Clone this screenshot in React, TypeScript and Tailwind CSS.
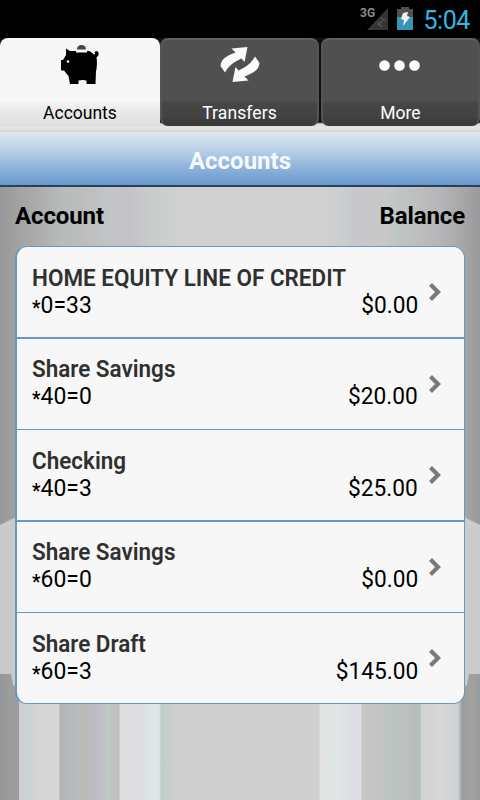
type Account = {
  name: string;
  number: string;
  balance: string;
  rowClass: string;
  textClass?: string;
};

const accounts: Account[] = [
  { name: "HOME EQUITY LINE OF CREDIT", number: "0=33", balance: "$0.00", rowClass: "h-[92px] border-b-2" },
  { name: "Share Savings", number: "40=0", balance: "$20.00", rowClass: "h-[91px] border-b", textClass: "pb-0.5" },
  { name: "Checking", number: "40=3", balance: "$25.00", rowClass: "h-[92px] border-b-2" },
  { name: "Share Savings", number: "60=0", balance: "$0.00", rowClass: "h-[91px] border-b", textClass: "pb-0.5" },
  { name: "Share Draft", number: "60=3", balance: "$145.00", rowClass: "h-[90px]" },
];

function StatusBar() {
  return (
    <div className="flex h-[38px] items-start justify-end bg-black">
      <svg width="30" height="38" viewBox="0 0 30 38">
        <path d="M28 8v22H7z" fill="#353535" />
        <path d="m17 22 5 5m0-6-4 4m3-7 4 3" stroke="#555" strokeWidth="1.5" fill="none" />
        <text x="0" y="17" fontFamily="Roboto, sans-serif" fontSize="12" fontWeight="700" fill="#8b8b8b">
          3G
        </text>
      </svg>
      <svg className="ml-[7px]" width="16" height="38" viewBox="0 0 16 38">
        <path d="M4 7h8v2h4v9H0V9h4z" fill="#505050" />
        <path d="M0 17h16v13H0z" fill="#3a94b8" />
        <path d="m6 13 5-1-1 4 3 1-7 9 1-6-3-1z" fill="#f4f4f4" />
      </svg>
      <span className="mr-[10px] ml-[10px] text-[25px] leading-[41px] tracking-[-0.4px] text-[#33b5e5]">5:04</span>
    </div>
  );
}

function PiggyBank() {
  return (
    <svg width="38" height="48" viewBox="0 0 38 48">
      <path d="M16 11.500a4.500 4.500 0 0 1 9 0z" fill="#444" />
      <path
        d="M5 10.500 9 13h6v1.500h11V13h2c2 1 3.500 2 5 3.500 1.500 0 1.500-1 .5-2 .5-2 3.500-1.500 4 0 .5 2-.5 4-2 5 .8 4 .5 10-.5 14l-.5 12.500H25.500v-3.500c-2.500-.8-5.500-.8-8 0V46H9l-1.500-8c-.5-1-1.500-1.500-2.500-3l-2-2.500H0V22h2l3-5z"
        fill="#000"
      />
      <circle cx="7" cy="23.500" r="1.300" fill="#f7f7f7" />
    </svg>
  );
}

function TransferArrows() {
  const arrow = "M27.500 9 11.500 10.500 15.500 14.500C9 17 1 20 .5 28L5 34.500C8 29 13 24 21.500 20.500L24.500 24z";
  return (
    <svg width="40" height="48" viewBox="0 0 40 48" fill="#fafafa">
      <path d={arrow} />
      <path d={arrow} transform="rotate(180 20 26.500)" />
    </svg>
  );
}

function MoreDots() {
  return (
    <svg width="44" height="48" viewBox="0 0 44 48" fill="#fff">
      <circle cx="5.500" cy="27.500" r="5.300" />
      <circle cx="20.500" cy="27.500" r="5.300" />
      <circle cx="35.500" cy="27.500" r="5.300" />
    </svg>
  );
}

function Tabs() {
  return (
    <div className="h-[94px] bg-black">
      <div className="flex h-[89px] bg-[linear-gradient(#111_0_84px,#dededa_86px)]">
        <div className="flex w-40 flex-col items-center rounded-t-lg bg-[linear-gradient(#f7f7f7_0_62px,#ececec_70px,#dedede_100%)]">
          <PiggyBank />
          <span className="mt-[15px] text-[17.5px] leading-6 text-black">Accounts</span>
        </div>
        <div className="flex h-[88px] w-[159px] flex-col items-center rounded-lg border-x-2 border-t-2 border-t-[#606060] border-r-[#555] border-l-[#555] bg-[linear-gradient(#505050_0_62px,#464646_66px,#424242_79px,#3a3a3a_84px)] bg-origin-border">
          <div className="-mt-0.5">
            <TransferArrows />
          </div>
          <span className="mt-[15px] text-[17.5px] leading-6 tracking-[0.1px] text-white">Transfers</span>
        </div>
        <div className="ml-[2px] flex h-[88px] w-[159px] flex-col items-center rounded-lg border-x-2 border-t-2 border-t-[#606060] border-r-[#555] border-l-[#555] bg-[linear-gradient(#505050_0_62px,#464646_66px,#424242_79px,#3a3a3a_84px)] bg-origin-border">
          <div className="-mt-0.5">
            <MoreDots />
          </div>
          <span className="mt-[15px] text-[17.5px] leading-6 text-white">More</span>
        </div>
      </div>
      <div className="h-[5px] bg-[linear-gradient(#e6e6e3,#d8d8d3)]" />
    </div>
  );
}

// Brushed-metal stripes with the lighter plate showing behind the list
function Backdrop() {
  return (
    <div className="absolute inset-0 -z-10 flex flex-col">
      <div className="h-[487px] bg-[linear-gradient(90deg,#97989b_0,#9fa09f_14px,#a8a8a8_30px,#b3b3b3_50px,#b6bcbd_62px,#bcbcbc_80px,#c2c5c6_108px,#c5c1c7_130px,#c9cccb_150px,#c8d0ce_165px,#d0d0d0_176px,#d0d0d0_325px,#c8d0ce_340px,#c9c6cc_355px,#c8c8c8_385px,#bdc5c4_400px,#bdbdbd_420px,#b5b6b8_440px,#acacac_455px,#a1a1a1_470px,#999a9e_480px)]" />
      <div className="flex-1 bg-[linear-gradient(90deg,#95969b_0,#9d9e9b_10px,#9c9c9f_19px,#cecece_19px,#cbd2d5_31px,#d7d7d7_40px,#d7d7d7_59px,#b4b4b5_60px,#b5bcbc_75px,#bcbbba_88px,#bebac4_96px,#bfc7c5_107px,#bfbfbf_119px,#dfdfdf_120px,#dddde4_143px,#dfe8e6_154px,#e0e8e6_159px,#c0cdca_161px,#cfcfcf_175px,#cfcfcf_319px,#e3e3e3_320px,#dfe7e4_335px,#dddbe5_358px,#e0dfe8_361px,#c6c6c6_362px,#c4c4c4_380px,#bac5c3_392px,#bfbfbf_405px,#b2bebb_420px,#d0d3d4_421px,#d8d8d8_440px,#cdd1d5_458px,#9b9c9d_462px,#a1a29f_472px,#999a9d_480px)]" />
      <svg className="absolute top-[330px] left-0" width="480" height="170" viewBox="0 0 480 170">
        <path d="M0 8 16 0V170L13 168 11 157H0z" fill="#c8cacc" />
        <path d="M464 0 480 8V157H469L467 168 464 170z" fill="#cbcbcc" />
      </svg>
    </div>
  );
}

function AccountRow({ account }: { account: Account }) {
  return (
    <li
      className={`flex items-center border-[#6499c4] bg-[#f7f7f7] pr-[22px] pl-[15px] text-[24px] leading-[27px] ${account.rowClass}`}
    >
      <div className={`min-w-0 flex-1 ${account.textClass ?? ""}`}>
        <div className="origin-left scale-x-[0.936] font-semibold whitespace-nowrap text-[#303030]">{account.name}</div>
        <div className="flex h-[27px] justify-between text-black">
          <span className="flex origin-left scale-x-[0.955]">
            <span className="w-[9px] pt-[3px] text-[20px] font-medium">*</span>
            {account.number}
          </span>
          <span className="origin-right scale-x-[0.945]">{account.balance}</span>
        </div>
      </div>
      <svg className="ml-[9px]" width="15" height="20" viewBox="-1 0 15 20">
        <path d="m2.500 2.500 7.500 7.500-7.500 7.500" fill="none" stroke="#7a7a7a" strokeWidth="4.200" />
      </svg>
    </li>
  );
}

export default function App() {
  return (
    <div className="h-[800px] w-[480px] overflow-hidden bg-[#cfcfcf] font-[Roboto,sans-serif]">
      <StatusBar />
      <Tabs />
      <header className="flex h-[55px] items-center justify-center border-b-2 border-[#293f5a] bg-[linear-gradient(#dce8ee_0,#c6d8ea_12px,#b0c9e4_22px,#93b5db_34px,#6698cf_100%)] pt-1">
        <h1 className="text-[24px] leading-7 font-bold text-[#f4faff]">Accounts</h1>
      </header>
      <main className="relative isolate h-[613px] px-[15px]">
        <Backdrop />
        <div className="flex h-[59px] items-center justify-between pb-0.5 text-[24px] font-bold tracking-[-0.1px] text-black">
          <span>Account</span>
          <span>Balance</span>
        </div>
        <ul className="overflow-hidden rounded-xl border border-l-2 border-[#6499c4]">
          {accounts.map((account) => (
            <AccountRow key={account.name + account.number} account={account} />
          ))}
        </ul>
      </main>
    </div>
  );
}
